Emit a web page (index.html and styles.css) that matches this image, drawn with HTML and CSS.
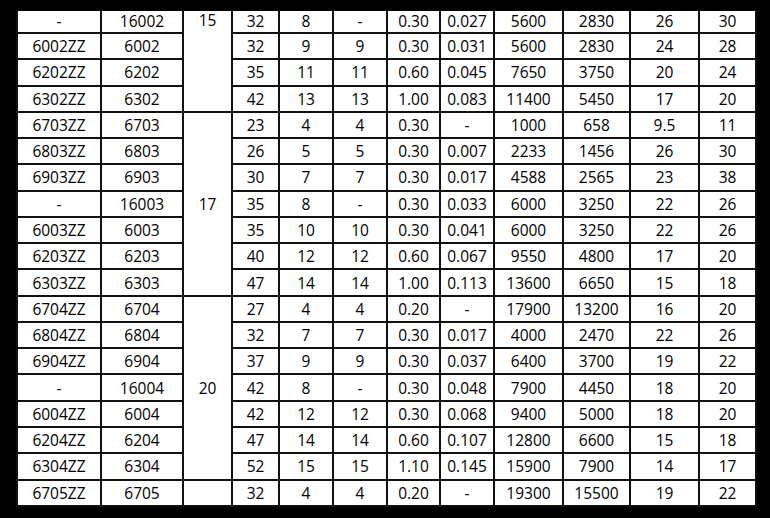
FILE: index.html
```html
<!DOCTYPE html>
<html>
<head>
<meta charset="utf-8">
<link rel="stylesheet" href="styles.css">
</head>
<body>
<div class="frame">
<table class="spec">
<colgroup>
<col class="c1"><col class="c2"><col class="c3"><col class="c4"><col class="c5"><col class="c6"><col class="c7"><col class="c8"><col class="c9"><col class="c10"><col class="c11"><col class="c12">
</colgroup>
<tbody>
<tr class="first"><td>-</td><td>16002</td><td rowspan="4" class="top">15</td><td>32</td><td>8</td><td>-</td><td>0.30</td><td>0.027</td><td>5600</td><td>2830</td><td>26</td><td>30</td></tr>
<tr><td>6002ZZ</td><td>6002</td><td>32</td><td>9</td><td>9</td><td>0.30</td><td>0.031</td><td>5600</td><td>2830</td><td>24</td><td>28</td></tr>
<tr><td>6202ZZ</td><td>6202</td><td>35</td><td>11</td><td>11</td><td>0.60</td><td>0.045</td><td>7650</td><td>3750</td><td>20</td><td>24</td></tr>
<tr><td>6302ZZ</td><td>6302</td><td>42</td><td>13</td><td>13</td><td>1.00</td><td>0.083</td><td>11400</td><td>5450</td><td>17</td><td>20</td></tr>
<tr><td>6703ZZ</td><td>6703</td><td rowspan="7">17</td><td>23</td><td>4</td><td>4</td><td>0.30</td><td>-</td><td>1000</td><td>658</td><td>9.5</td><td>11</td></tr>
<tr><td>6803ZZ</td><td>6803</td><td>26</td><td>5</td><td>5</td><td>0.30</td><td>0.007</td><td>2233</td><td>1456</td><td>26</td><td>30</td></tr>
<tr><td>6903ZZ</td><td>6903</td><td>30</td><td>7</td><td>7</td><td>0.30</td><td>0.017</td><td>4588</td><td>2565</td><td>23</td><td>38</td></tr>
<tr><td>-</td><td>16003</td><td>35</td><td>8</td><td>-</td><td>0.30</td><td>0.033</td><td>6000</td><td>3250</td><td>22</td><td>26</td></tr>
<tr><td>6003ZZ</td><td>6003</td><td>35</td><td>10</td><td>10</td><td>0.30</td><td>0.041</td><td>6000</td><td>3250</td><td>22</td><td>26</td></tr>
<tr><td>6203ZZ</td><td>6203</td><td>40</td><td>12</td><td>12</td><td>0.60</td><td>0.067</td><td>9550</td><td>4800</td><td>17</td><td>20</td></tr>
<tr><td>6303ZZ</td><td>6303</td><td>47</td><td>14</td><td>14</td><td>1.00</td><td>0.113</td><td>13600</td><td>6650</td><td>15</td><td>18</td></tr>
<tr><td>6704ZZ</td><td>6704</td><td rowspan="7">20</td><td>27</td><td>4</td><td>4</td><td>0.20</td><td>-</td><td>17900</td><td>13200</td><td>16</td><td>20</td></tr>
<tr><td>6804ZZ</td><td>6804</td><td>32</td><td>7</td><td>7</td><td>0.30</td><td>0.017</td><td>4000</td><td>2470</td><td>22</td><td>26</td></tr>
<tr><td>6904ZZ</td><td>6904</td><td>37</td><td>9</td><td>9</td><td>0.30</td><td>0.037</td><td>6400</td><td>3700</td><td>19</td><td>22</td></tr>
<tr><td>-</td><td>16004</td><td>42</td><td>8</td><td>-</td><td>0.30</td><td>0.048</td><td>7900</td><td>4450</td><td>18</td><td>20</td></tr>
<tr><td>6004ZZ</td><td>6004</td><td>42</td><td>12</td><td>12</td><td>0.30</td><td>0.068</td><td>9400</td><td>5000</td><td>18</td><td>20</td></tr>
<tr><td>6204ZZ</td><td>6204</td><td>47</td><td>14</td><td>14</td><td>0.60</td><td>0.107</td><td>12800</td><td>6600</td><td>15</td><td>18</td></tr>
<tr><td>6304ZZ</td><td>6304</td><td>52</td><td>15</td><td>15</td><td>1.10</td><td>0.145</td><td>15900</td><td>7900</td><td>14</td><td>17</td></tr>
<tr><td>6705ZZ</td><td>6705</td><td></td><td>32</td><td>4</td><td>4</td><td>0.20</td><td>-</td><td>19300</td><td>15500</td><td>19</td><td>22</td></tr>
</tbody>
</table>
</div>
</body>
</html>
```
FILE: styles.css
```css
html, body {
  margin: 0;
  padding: 0;
  background: #000;
}
.frame {
  width: 770px;
  height: 518px;
  padding: 11px 0 0 16px;
  box-sizing: border-box;
  overflow: hidden;
}
.spec {
  border-collapse: collapse;
  table-layout: fixed;
  width: 739px;
  font-family: "Open Sans", "Noto Sans", sans-serif;
  font-size: 15.5px;
  color: #000;
  background: #fff;
}
.spec td {
  border: 2px solid #111;
  padding: 0;
  height: 24.28px;
  line-height: 20px;
  text-align: center;
  vertical-align: middle;
  white-space: nowrap;
}
.spec tr.first td {
  border-top: 0;
  height: 20px;
  padding-bottom: 1px;
  line-height: 18px;
}
.spec tr.first td.top {
  vertical-align: top;
  padding-top: 0;
}
.c1 { width: 84px; }
.c2 { width: 82px; }
.c3 { width: 49px; }
.c4 { width: 47px; }
.c5 { width: 54px; }
.c6 { width: 54px; }
.c7 { width: 53px; }
.c8 { width: 54px; }
.c9 { width: 69px; }
.c10 { width: 67px; }
.c11 { width: 69px; }
.c12 { width: 57px; }
```
